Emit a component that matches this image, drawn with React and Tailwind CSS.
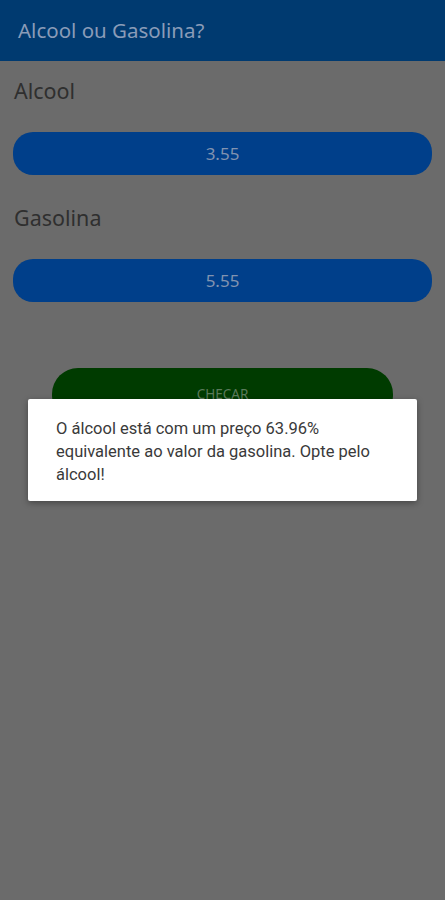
import React from 'react'

const PriceField = ({ label, value, top }) => (
  <div className="flex flex-col">
    <span className={`text-[21.5px] leading-[28px] text-[#2f2f2f] px-[14px] ${top}`}>{label}</span>
    <div className="mx-[13px] mt-[27px] h-[43px] rounded-[20px] bg-[#003f8a] flex items-center justify-center">
      <span className="text-[17px] text-[#8193b0]">{value}</span>
    </div>
  </div>
)

export default function App() {
  return (
    <div className="relative w-[445px] h-[900px] bg-[#6b6b6b] overflow-hidden font-['Noto_Sans',Roboto,sans-serif]">
      <header className="h-[61px] bg-[#003a70] flex items-center px-[18px]">
        <h1 className="text-[20.5px] text-[#8a9cb8]">Alcool ou Gasolina?</h1>
      </header>

      <PriceField label="Alcool" value="3.55" top="pt-[16px]" />
      <PriceField label="Gasolina" value="5.55" top="pt-[29px]" />

      <div className="mx-[52px] mt-[66px] h-[54px] rounded-[26px] bg-[#003b00] flex justify-center pt-[16px]">
        <span className="text-[13.5px] text-[#5b7a5b]">CHECAR</span>
      </div>

      <div className="absolute left-[28px] top-[399px] w-[389px] h-[102px] bg-white rounded-[2px] shadow-[0_2px_6px_rgba(0,0,0,0.35)] px-[28px] pt-[18px]">
        <p className="font-['Roboto',sans-serif] text-[16.5px] leading-[23px] text-[#3a3a3a]">
          O álcool está com um preço 63.96% equivalente ao valor da gasolina. Opte pelo álcool!
        </p>
      </div>
    </div>
  )
}
